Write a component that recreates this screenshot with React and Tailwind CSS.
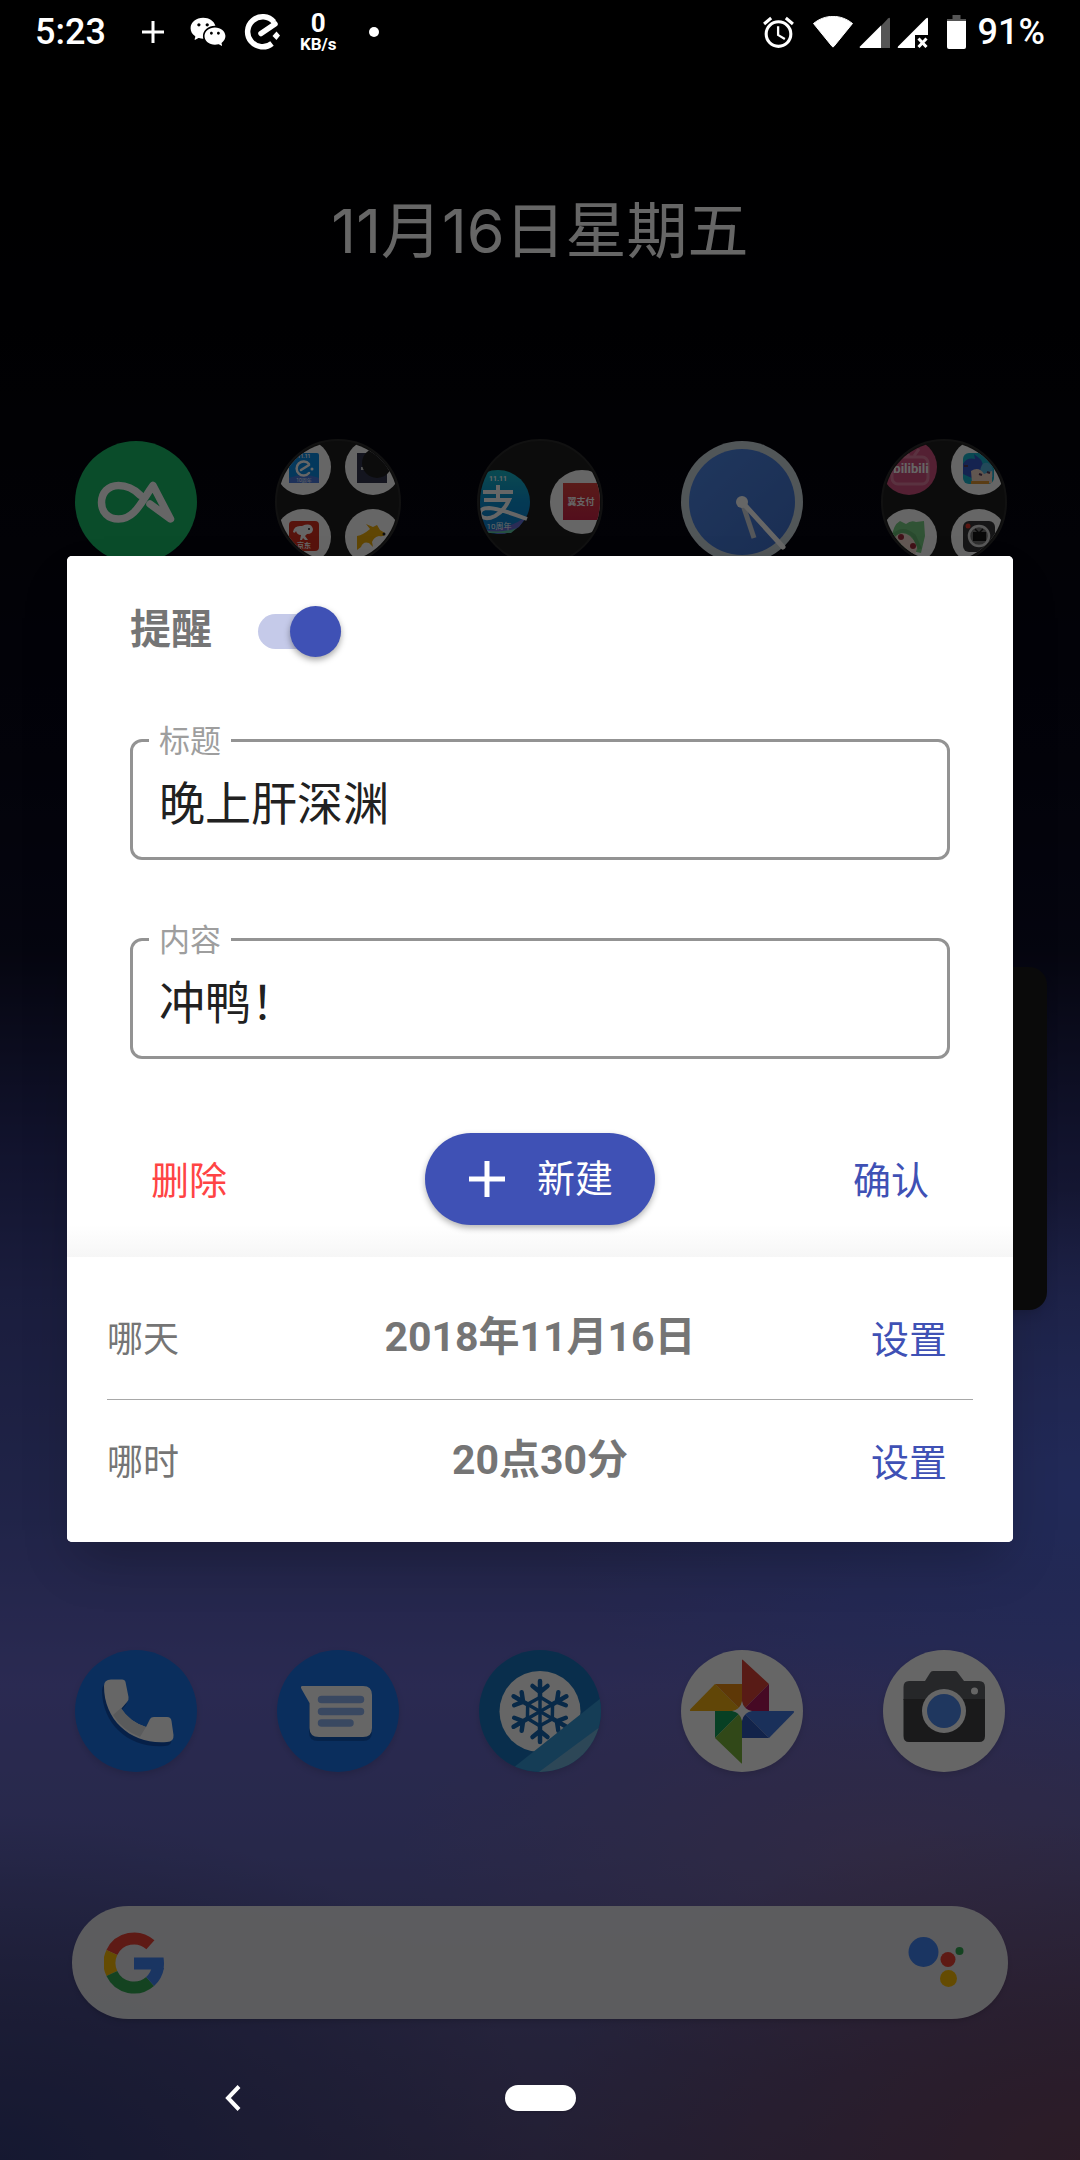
import { useState } from 'react'
import { RiWechatFill } from 'react-icons/ri'
import { MdAlarm } from 'react-icons/md'

// ---------- status bar ----------

function StatusBar() {
  return (
    <header className="flex h-[70px] items-start justify-between px-[35px] pt-2 text-white">
      <div className="flex h-12 items-center">
        <span className="text-[36px] leading-[48px] font-medium">5:23</span>
        <svg className="ml-9 h-[22px] w-[22px]" viewBox="0 0 22 22" aria-hidden="true">
          <path d="M11 0V22M0 11H22" stroke="currentColor" strokeWidth="3" />
        </svg>
        <RiWechatFill className="ml-[25px] h-[38px] w-[38px]" />
        <svg className="ml-[17px] h-9 w-9" viewBox="0 0 36 36" fill="none" aria-hidden="true">
          <path d="M30 8A15 15 0 1 0 28 29.500" stroke="currentColor" strokeWidth="5.500" />
          <path d="M17 19.500L31 10" stroke="currentColor" strokeWidth="5.500" strokeLinecap="round" />
          <path d="M32.500 17.500L36 21.500L32.500 26L28.500 22Z" fill="currentColor" />
        </svg>
        <div className="ml-5 flex flex-col items-center font-bold">
          <span className="text-[26px] leading-6">0</span>
          <span className="text-[17px] leading-[18px]">KB/s</span>
        </div>
        <span className="ml-8 h-[10px] w-[10px] rounded-full bg-white" />
      </div>

      <div className="flex h-12 items-center">
        <MdAlarm className="h-[37px] w-[37px]" />
        <svg className="ml-4 h-8 w-10" viewBox="0 0 40 32" fill="currentColor" aria-hidden="true">
          <path d="M0.500 7.500C12 -2 28 -2 39.500 7.500L20.800 30.500Q20 31.500 19.200 30.500Z" stroke="currentColor" strokeWidth="1" strokeLinejoin="round" />
        </svg>
        <svg className="ml-[6px] h-[31px] w-[31px]" viewBox="0 0 31 31" aria-hidden="true">
          <path d="M22 9L29 1.500Q31 0 31 2V31H22Z" fill="#555" />
          <path d="M22 8.500V31H1.500Q0 31 1 29.500Z" fill="currentColor" />
        </svg>
        <svg className="ml-[7px] h-[31px] w-[31px]" viewBox="0 0 31 31" aria-hidden="true">
          <path d="M31 2Q31 0 29 1.500L1 29.500Q0 31 1.500 31H18V18H31Z" fill="currentColor" />
          <path d="M21.500 21.500L29.500 30M29.500 21.500L21.500 30" stroke="currentColor" strokeWidth="3" />
        </svg>
        <svg className="ml-[19px] h-[34px] w-[19px]" viewBox="0 0 19 34" aria-hidden="true">
          <path d="M0 6V4H5.500V0H13.500V4H19V6Z" fill="#555" />
          <path d="M0 6H19V32Q19 34 17 34H2Q0 34 0 32Z" fill="currentColor" />
        </svg>
        <span className="ml-3 text-[36px] leading-[48px] font-medium">91%</span>
      </div>
    </header>
  )
}

// ---------- launcher icons ----------

function CoolapkIcon() {
  return (
    <svg className="h-[122px] w-[122px]" viewBox="0 0 122 122" fill="none">
      <circle cx="61" cy="61" r="61" fill="#19bd6a" />
      <path
        d="M65 54C58 47 51 44.500 43.500 44.500C33 44.500 26.500 52 26.500 61.500C26.500 71 33 78 43.500 78C60 78 66 61 78 44.500L95.500 78L75 63"
        stroke="#fff"
        strokeWidth="7.500"
        strokeLinecap="round"
        strokeLinejoin="round"
      />
    </svg>
  )
}

function Folder({ id, children }) {
  return (
    <svg className="h-[126px] w-[126px]" viewBox="0 0 126 126">
      <defs>
        <clipPath id={id}>
          <circle cx="63" cy="63" r="60" />
        </clipPath>
      </defs>
      <circle cx="63" cy="63" r="62" fill="#1f1f1f" stroke="#2c2c2c" strokeWidth="2" />
      <g clipPath={`url(#${id})`}>{children}</g>
    </svg>
  )
}

function ShoppingFolder() {
  return (
    <Folder id="folder-shopping">
      <circle cx="28" cy="28" r="28" fill="#fff" />
      <circle cx="98" cy="28" r="28" fill="#fff" />
      <circle cx="28" cy="98" r="28" fill="#fff" />
      <circle cx="98" cy="98" r="28" fill="#fff" />

      <rect x="14" y="14" width="30" height="30" rx="2" fill="#0c8de6" />
      <path d="M14 39Q29 33 44 39V44H14Z" fill="#4a7be0" />
      <path d="M34 25A7 7 0 1 0 34 34M26 31L34 26" fill="none" stroke="#fff" strokeWidth="2.500" strokeLinecap="round" />
      <circle cx="37" cy="30" r="1.500" fill="#fff" />
      <text x="29" y="19" fontSize="5" fontWeight="700" textAnchor="middle" fill="#fff">11.11</text>
      <text x="29" y="43" fontSize="5" textAnchor="middle" fill="#fff">10周年</text>

      <rect x="82" y="14" width="30" height="30" fill="#33364f" />
      <path d="M86 28H89V31H86Z" fill="#ccc" />
      <circle cx="102" cy="24" r="15" fill="#1f1f1f" />

      <rect x="14" y="82" width="30" height="30" rx="4" fill="#d9301f" />
      <path d="M18 93Q19 86 27 87Q36 83 38 90Q38 95 32 95L30 97L33 101H30L28 99L27 101H25L26 96Q22 96 21 92Q20 95 18 93Z" fill="#fff" />
      <circle cx="34" cy="90" r="1" fill="#222" />
      <text x="29" y="109" fontSize="7" fontWeight="700" textAnchor="middle" fill="#fff">京东</text>

      <path d="M82 97Q88 96 95 90L91 85L98 88L102 86L105 91L110 94Q110 98 104 97Q99 98 97 103L98 108L94 104Q88 102 86 108L82 111Z" fill="#efae0c" />
      <circle cx="109" cy="95" r="1.500" fill="#222" />
    </Folder>
  )
}

function PaymentFolder() {
  return (
    <Folder id="folder-payment">
      <defs>
        <linearGradient id="alipay" x1="0" y1="0" x2="0" y2="1">
          <stop offset="0" stopColor="#19b9c9" />
          <stop offset="0.5" stopColor="#0b90d2" />
          <stop offset="1" stopColor="#0f7fd0" />
        </linearGradient>
        <linearGradient id="bestpay" x1="0" y1="0" x2="0" y2="1">
          <stop offset="0" stopColor="#e0453f" />
          <stop offset="1" stopColor="#cf2448" />
        </linearGradient>
      </defs>
      <circle cx="21" cy="63" r="32" fill="url(#alipay)" />
      <path d="M6 91Q30 92 50 77L42 88Q30 96 21 95Z" fill="#6a6fd8" />
      <path d="M6 91Q24 95 40 89L34 94H10Z" fill="#5fc9a8" />
      <text x="21" y="42" fontSize="7" fontWeight="700" textAnchor="middle" fill="#fff">11.11</text>
      <path d="M6 53H36M21 46V60M7 61H32Q27 72 18 77Q8 82 3 76Q2 69 12 69Q24 70 50 80" fill="none" stroke="#fff" strokeWidth="4" />
      <text x="22" y="90" fontSize="8" textAnchor="middle" fill="#fff">10周年</text>

      <circle cx="105" cy="63" r="32" fill="#fff" />
      <rect x="86" y="44" width="37" height="37" fill="url(#bestpay)" />
      <text x="104" y="66" fontSize="9" fontWeight="700" textAnchor="middle" fill="#fff">翼支付</text>
    </Folder>
  )
}

function MediaFolder() {
  return (
    <Folder id="folder-media">
      <circle cx="28" cy="28" r="28" fill="#d2527f" />
      <circle cx="98" cy="28" r="28" fill="#fff" />
      <circle cx="28" cy="98" r="28" fill="#fff" />
      <circle cx="98" cy="98" r="28" fill="#fff" />

      <rect x="11" y="18" width="36" height="27" rx="6" fill="none" stroke="#e27ea0" strokeWidth="3" />
      <path d="M22 10L28 17M38 10L33 17" stroke="#e27ea0" strokeWidth="3" />
      <text x="30" y="34" fontSize="13" fontWeight="700" textAnchor="middle" fill="#fff">bilibili</text>

      <rect x="82" y="14" width="31" height="31" rx="6" fill="#18b4cc" />
      <path d="M82 25Q86 18 94 20L93 15L98 19Q103 22 102 34L93 40L82 35Z" fill="#3558c8" />
      <path d="M99 33Q100 22 107 24Q113 27 112 38L104 41Z" fill="#55b7df" />
      <path d="M90 32Q98 27 103 35L111 32V44H91Z" fill="#f3d6c8" />
      <path d="M90 42H108V45H90Z" fill="#e29a35" />
      <path d="M83 27H87M98 35L101 36M106 33L109 34" stroke="#5b3a58" strokeWidth="2" />

      <path d="M11 98Q12 86 19 82L25 85Q30 81 35 83L43 82L44 97L40 114L22 110Z" fill="#79cf84" />
      <path d="M12 97Q21 91 29 97L37 106L34 116H18Z" fill="#f6ddd2" />
      <path d="M12 97Q22 87 33 97L39 110" fill="none" stroke="#68b973" strokeWidth="4" />
      <circle cx="20" cy="98" r="3" fill="#a02c3c" />
      <circle cx="32" cy="107" r="3" fill="#a02c3c" />

      <rect x="82" y="82" width="32" height="31" rx="6" fill="#39393b" />
      <circle cx="87" cy="87" r="2.500" fill="#e0392d" />
      <circle cx="98" cy="97" r="10" fill="#777" stroke="#ddd" strokeWidth="2.500" />
      <path d="M92 93H105V102H92Z" fill="#161616" />
      <path d="M94 90L98 94L102 90" fill="none" stroke="#161616" strokeWidth="1.500" />
    </Folder>
  )
}

function ClockIcon() {
  return (
    <svg className="h-[122px] w-[122px]" viewBox="0 0 122 122">
      <defs>
        <linearGradient id="clock-face" x1="0" y1="0" x2="1" y2="1">
          <stop offset="0" stopColor="#5089e8" />
          <stop offset="1" stopColor="#4273cf" />
        </linearGradient>
      </defs>
      <circle cx="61" cy="61" r="61" fill="#cbd6dc" />
      <circle cx="61" cy="61" r="53" fill="url(#clock-face)" />
      <path d="M61 61L73 97" stroke="#d4d9e0" strokeWidth="5" />
      <path d="M61 61L102 106" stroke="#fff" strokeWidth="5" strokeLinecap="round" />
      <circle cx="61" cy="61" r="6" fill="#fff" />
    </svg>
  )
}

function PhoneIcon() {
  return (
    <svg className="h-[122px] w-[122px] overflow-visible drop-shadow-md" viewBox="0 0 122 122">
      <circle cx="61" cy="61" r="61" fill="#1a73e8" />
      <path
        d="M29 36Q29 29.500 36 29.500H47Q50 29.500 50.500 32L53.500 47Q54 50 52 52L46 59Q55 72 71 77L75 69Q76 67 79 67H92Q96 67 96.500 71L98.500 85Q99 92 92 92C58 95 29 72 29 36Z"
        transform="translate(-2 4)"
        fill="#0f52b4"
      />
      <path
        d="M29 36Q29 29.500 36 29.500H47Q50 29.500 50.500 32L53.500 47Q54 50 52 52L46 59Q55 72 71 77L75 69Q76 67 79 67H92Q96 67 96.500 71L98.500 85Q99 92 92 92C58 95 29 72 29 36Z"
        fill="#fff"
      />
      <path d="M38 65L46 58Q55 72 71 77L65 87Q47 80 38 65Z" fill="#e2e3e6" />
    </svg>
  )
}

function MessagesIcon() {
  return (
    <svg className="h-[122px] w-[122px] overflow-visible drop-shadow-md" viewBox="0 0 122 122">
      <circle cx="61" cy="61" r="61" fill="#1a73e8" />
      <path d="M32 48H95V82Q95 91 86 91H41Q32 91 32 82Z" fill="#1057b8" />
      <path d="M25.500 36H86Q95 36 95 45V78Q95 87 86 87H42Q32.500 87 32.500 78V53L24.500 39Q23 36 25.500 36Z" fill="#fff" />
      <path d="M44.500 49.500H83.500M44.500 61.500H83.500M44.500 73H73" stroke="#8fb4f2" strokeWidth="7.500" strokeLinecap="round" />
    </svg>
  )
}

function FreezerIcon() {
  return (
    <svg className="h-[122px] w-[122px] overflow-visible drop-shadow-md" viewBox="0 0 122 122">
      <defs>
        <clipPath id="freezer">
          <circle cx="61" cy="61" r="61" />
        </clipPath>
      </defs>
      <g clipPath="url(#freezer)">
        <rect width="122" height="122" fill="#1874bd" />
        <circle cx="61" cy="61.500" r="40.500" fill="#fff" />
        <g stroke="#1668b4" strokeWidth="4.500" strokeLinecap="round" fill="none">
          {[0, 60, 120, 180, 240, 300].map((deg) => (
            <g key={deg} transform={`rotate(${deg} 61 61.500)`}>
              <path d="M61 48V31M53.500 36L61 42L68.500 36" />
              <path d="M61 61.500V47M61 47L73.500 54.500" strokeWidth="3.500" />
            </g>
          ))}
        </g>
        <path d="M122 48L34 118L60 124L122 76Z" fill="#3598d6" />
        <path d="M122 76L60 122L122 124Z" fill="#72b2da" />
      </g>
    </svg>
  )
}

function PhotosIcon() {
  return (
    <svg className="h-[122px] w-[122px] overflow-visible drop-shadow-md" viewBox="0 0 122 122">
      <circle cx="61" cy="61" r="61" fill="#fff" />
      <path d="M61 10Q61 9 62 10L88 34L61 61Z" fill="#db4437" />
      <path d="M88 34V61H61Z" fill="#b0175a" />
      <path d="M10 61Q8 61 9.500 59L34 34L61 61Z" fill="#f2b012" />
      <path d="M34 34H61V61Z" fill="#ea8c12" />
      <path d="M34 61H61L34 88Z" fill="#12a05a" />
      <path d="M34 88L61 61V113Q61 114 60 113Z" fill="#7cb53c" />
      <path d="M61 61H112Q114 61 112.500 63L88 88Z" fill="#4379e2" />
      <path d="M61 61L88 88H61Z" fill="#2f57ba" />
      <path d="M61 51Q62.500 59.500 71 61Q62.500 62.500 61 71Q59.500 62.500 51 61Q59.500 59.500 61 51Z" fill="#fff" />
    </svg>
  )
}

function CameraIcon() {
  return (
    <svg className="h-[122px] w-[122px] overflow-visible drop-shadow-md" viewBox="0 0 122 122">
      <circle cx="61" cy="61" r="61" fill="#fff" />
      <path d="M26 31H42L47 23Q48 21 50 21H72Q74 21 75 23L81 31H96Q102 31 102 37V50H20.500V37Q20.500 31 26 31Z" fill="#5f6368" />
      <path d="M20.500 49H102V86Q102 92 96 92H26Q20.500 92 20.500 86Z" fill="#414244" />
      <circle cx="61" cy="61" r="22" fill="#fff" />
      <circle cx="61" cy="61" r="17" fill="#4f8bee" />
      <circle cx="91.500" cy="41" r="3.500" fill="#fff" />
    </svg>
  )
}

function GoogleLogo() {
  return (
    <svg className="h-[62px] w-[60px]" viewBox="0 0 60 62" fill="none" strokeWidth="12">
      <path d="M7.850 20.500A24.500 24.500 0 0 1 46.400 12.800" stroke="#ea4335" />
      <path d="M7.850 41.500A24.500 24.500 0 0 1 7.850 20.500" stroke="#fbbc05" />
      <path d="M46.100 49.500A24.500 24.500 0 0 1 7.850 41.500" stroke="#34a853" />
      <path d="M54 35A24.500 24.500 0 0 1 46.100 49.500" stroke="#4285f4" />
      <path d="M30 25.500H59.500Q60.500 31 59.500 37.500H30Z" fill="#4285f4" stroke="none" />
    </svg>
  )
}

function AssistantLogo() {
  return (
    <svg className="h-[52px] w-14" viewBox="0 0 56 52">
      <circle cx="15.500" cy="15" r="15" fill="#4285f4" />
      <circle cx="40" cy="22.500" r="7.500" fill="#ea4335" />
      <circle cx="51.500" cy="14" r="4" fill="#34a853" />
      <circle cx="40.500" cy="41.500" r="8.500" fill="#fbbc05" />
    </svg>
  )
}

const apps = [
  { name: '酷安', Icon: CoolapkIcon },
  { name: '购物', Icon: ShoppingFolder },
  { name: '支付', Icon: PaymentFolder },
  { name: '时钟', Icon: ClockIcon },
  { name: '影音', Icon: MediaFolder },
]

const dock = [
  { name: '电话', Icon: PhoneIcon },
  { name: '信息', Icon: MessagesIcon },
  { name: '冰箱', Icon: FreezerIcon },
  { name: '相册', Icon: PhotosIcon },
  { name: '相机', Icon: CameraIcon },
]

function IconRow({ items, className = '' }) {
  return (
    <div className={`flex justify-between px-[73px] ${className}`}>
      {items.map(({ name, Icon }) => (
        <button key={name} type="button" aria-label={name} className="flex h-[126px] w-[126px] items-center justify-center">
          <Icon />
        </button>
      ))}
    </div>
  )
}

function HomeScreen() {
  return (
    <div className="flex flex-col bg-[radial-gradient(ellipse_50%_16%_at_100%_100%,#6e4560_0%,#6e456000_100%),radial-gradient(ellipse_50%_16%_at_0%_100%,#363e7c_0%,#363e7c00_100%),radial-gradient(ellipse_45%_10%_at_82%_86%,#8a6c9c88_0%,#8a6c9c00_100%),radial-gradient(ellipse_50%_14%_at_100%_69%,#5468dc_0%,#5468dc00_100%),linear-gradient(to_bottom,#000_0%,#020206_15%,#08081a_35%,#0e0f28_44%,#2c3070_53%,#434a9a_60%,#515ab4_70%,#6a69cc_78%,#6264b8_86%,#5c5896_93%,#584e82_100%)] pt-[186px] pb-[141px]">
      <h1 className="text-center font-['Inter','Noto_Sans_CJK_SC',sans-serif] text-[61px] leading-[90px] text-white">11月16日星期五</h1>
      <IconRow items={apps} className="mt-[163px]" />
      <div className="mt-[402px] mr-[33px] h-[343px] w-4/5 self-end rounded-[18px] bg-[#1d1d1d] shadow-lg" />
      <IconRow items={dock} className="mt-auto" />
      <div className="mx-[72px] mt-[132px] flex h-[113px] items-center justify-between rounded-full bg-[#ededf0]/95 pr-11 pl-8 shadow-md">
        <GoogleLogo />
        <AssistantLogo />
      </div>
    </div>
  )
}

// ---------- reminder dialog ----------

function OutlinedField({ id, label, value, onChange, className = '' }) {
  return (
    <fieldset className={`min-w-0 rounded-xl border-[3px] border-[#939393] px-4 ${className}`}>
      <legend className="px-[10px] pt-1 text-[31px] leading-[40px] text-[#9e9e9e]">
        <label htmlFor={id}>{label}</label>
      </legend>
      <input
        id={id}
        type="text"
        value={value}
        onChange={(e) => onChange(e.target.value)}
        className="mb-[19px] block h-[76px] w-full bg-transparent px-[10px] text-[46px] text-[#212121] outline-none"
      />
    </fieldset>
  )
}

function ScheduleRow({ label, value }) {
  return (
    <div className="grid h-[122px] grid-cols-[1fr_auto_1fr] items-center">
      <span className="pt-1 text-[36px] text-[#757575]">{label}</span>
      <span className="text-[41px] font-bold text-[#757575]">{value}</span>
      <button type="button" className="mr-[26px] justify-self-end pt-1 text-[38px] text-[#3f51b5]">设置</button>
    </div>
  )
}

function ReminderDialog() {
  const [enabled, setEnabled] = useState(true)
  const [title, setTitle] = useState('晚上肝深渊')
  const [content, setContent] = useState('冲鸭！')

  return (
    <div role="dialog" aria-label="提醒" className="w-full overflow-hidden rounded-[5px] bg-white shadow-2xl">
      <section className="bg-[linear-gradient(to_top,#f6f6f6_0,#fff_32px)] px-[63px] pt-[47px] pb-8">
        <div className="flex h-14 items-center gap-[46px]">
          <label htmlFor="enabled" className="text-[41px] font-bold text-[#757575]">提醒</label>
          <input
            id="enabled"
            type="checkbox"
            role="switch"
            checked={enabled}
            onChange={(e) => setEnabled(e.target.checked)}
            className="relative h-[35px] w-[83px] appearance-none rounded-full bg-[#c5cae9] before:absolute before:-top-2 before:left-0 before:h-[51px] before:w-[51px] before:rounded-full before:bg-[#9e9e9e] before:shadow-[0_3px_6px_rgba(0,0,0,0.35)] checked:before:left-8 checked:before:bg-[#3f51b5]"
          />
        </div>

        <OutlinedField id="title" label="标题" value={title} onChange={setTitle} className="mt-[59px]" />
        <OutlinedField id="content" label="内容" value={content} onChange={setContent} className="mt-[57px]" />

        <div className="mt-[74px] flex items-center justify-between px-[21px]">
          <button type="button" className="pt-1 text-[38px] text-[#ff4444]">删除</button>
          <button
            type="button"
            className="flex h-[92px] items-center gap-8 rounded-full bg-[#3f51b5] pr-[42px] pl-11 text-[38px] text-white shadow-[0_3px_6px_rgba(0,0,0,0.3)]"
          >
            <svg className="h-9 w-9" viewBox="0 0 36 36" aria-hidden="true">
              <path d="M18 0V36M0 18H36" stroke="currentColor" strokeWidth="5" />
            </svg>
            新建
          </button>
          <button type="button" className="pt-1 text-[38px] text-[#3f51b5]">确认</button>
        </div>
      </section>

      <section className="bg-white px-10 py-5">
        <ScheduleRow label="哪天" value="2018年11月16日" />
        <hr className="border-t border-[#a8a8a8]" />
        <ScheduleRow label="哪时" value="20点30分" />
      </section>
    </div>
  )
}

function NavBar() {
  return (
    <nav className="grid h-[132px] grid-cols-[1fr_auto_1fr] items-center pt-2 text-white">
      <button type="button" aria-label="返回" className="ml-[217px] flex h-8 w-8 items-center justify-center">
        <svg className="h-[26px] w-4" viewBox="0 0 16 26" fill="none">
          <path d="M14 1.500L3 13L14 24.500" stroke="currentColor" strokeWidth="4" />
        </svg>
      </button>
      <button type="button" aria-label="主屏幕" className="h-[26px] w-[71px] rounded-full bg-white shadow" />
    </nav>
  )
}

export default function App() {
  return (
    <div className="grid min-h-screen font-['Roboto','Noto_Sans_CJK_SC',sans-serif]">
      <div className="col-start-1 row-start-1 grid">
        <HomeScreen />
      </div>
      <div className="relative z-10 col-start-1 row-start-1 flex flex-col bg-black/60">
        <StatusBar />
        <main className="flex flex-1 items-center px-[67px]">
          <ReminderDialog />
        </main>
        <NavBar />
      </div>
    </div>
  )
}
